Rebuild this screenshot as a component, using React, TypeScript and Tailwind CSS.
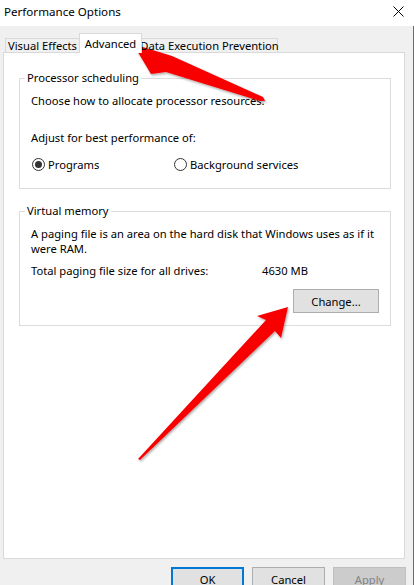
import React from "react";

// Windows 10 "Performance Options" dialog, Advanced tab, with two red callout arrows

function Radio({ checked, label }: { checked?: boolean; label: string }) {
  return (
    <label className="flex items-center gap-[3px]">
      <span className="w-[13px] h-[13px] rounded-full border border-[#333333] bg-white flex items-center justify-center">
        {checked && <span className="w-[7px] h-[7px] rounded-full bg-[#333333]" />}
      </span>
      <span>{label}</span>
    </label>
  );
}

function GroupBox({ title, className, children }: { title: string; className?: string; children: React.ReactNode }) {
  return (
    <fieldset className={`w-[372px] border border-[#dcdcdc] ${className ?? ""}`}>
      <legend className="ml-[5px] px-[2px] leading-[16px]">{title}</legend>
      {children}
    </fieldset>
  );
}

function DialogButton({
  children,
  primary,
  disabled,
}: {
  children: React.ReactNode;
  primary?: boolean;
  disabled?: boolean;
}) {
  if (disabled) {
    return (
      <div className="w-[73px] h-[24px] flex items-center justify-center bg-[#cccccc] border border-[#bfbfbf] text-[#838383]">
        {children}
      </div>
    );
  }
  return (
    <div
      className={`w-[73px] h-[24px] flex items-center justify-center bg-[#e1e1e1] ${
        primary ? "border-2 border-[#0078d7]" : "border border-[#adadad]"
      }`}
    >
      {children}
    </div>
  );
}

function Arrows() {
  return (
    <svg className="absolute inset-0 pointer-events-none" width="414" height="585" viewBox="0 0 414 585">
      <defs>
        <filter id="shadow" x="-10%" y="-10%" width="130%" height="130%">
          <feDropShadow dx="1" dy="1.5" stdDeviation="1" floodColor="#000" floodOpacity="0.35" />
        </filter>
      </defs>
      <g filter="url(#shadow)" fill="#f80000">
        <polygon points="133,44 172,56 263,97 265,101 260,101 166,72 151,74" />
        <polygon points="288,307 281,338 275,331 140,460 138,459 266,320 257,316" />
      </g>
    </svg>
  );
}

export default function App(): React.JSX.Element {
  return (
    <div className="relative w-[414px] h-[585px] overflow-hidden bg-[#f0f0f0] text-black text-[11.2px] leading-[15px] font-['Segoe_UI','Noto_Sans',sans-serif]">
      {/* Title bar */}
      <div className="h-[26px] bg-white flex items-center justify-between pl-[4px] pr-[10px]">
        <span className="text-[11.6px] -mt-[3px]">Performance Options</span>
        <svg width="11" height="11" viewBox="0 0 11 11" className="-mt-[4px]">
          <path d="M0.5 0.5 L10.5 10.5 M10.5 0.5 L0.5 10.5" stroke="#000" strokeWidth="1" />
        </svg>
      </div>

      {/* Body */}
      <div className="h-[559px] border-r border-[#6e6e6e] pl-[3px] pt-[7px]">
        {/* Tabs */}
        <div className="relative z-10 flex items-end h-[20px] -mb-px pl-[2px] whitespace-nowrap">
          <div className="w-[75px] h-[14px] mb-px flex items-center justify-center border border-b-0 border-[#d9d9d9]">
            Visual Effects
          </div>
          <div className="relative z-10 -ml-px w-[63px] h-[20px] flex items-center justify-center bg-white border border-b-0 border-[#d9d9d9]">
            Advanced
          </div>
          <div className="-ml-px w-[137px] h-[14px] mb-px flex items-center justify-center border border-b-0 border-[#d9d9d9]">
            Data Execution Prevention
          </div>
        </div>

        {/* Tab panel */}
        <div className="w-[402px] h-[507px] bg-white border border-[#d9d9d9] pl-[15px] pt-[17px]">
          <GroupBox title="Processor scheduling">
            <div className="pl-[11px] pt-[7px] pb-[16px]">
              <p>Choose how to allocate processor resources.</p>
              <p className="mt-[22px]">Adjust for best performance of:</p>
              <div className="mt-[12px] h-[15px] flex items-center pl-[1px]">
                <div className="w-[142px]">
                  <Radio checked label="Programs" />
                </div>
                <Radio label="Background services" />
              </div>
            </div>
          </GroupBox>

          <GroupBox title="Virtual memory" className="mt-[14px]">
            <div className="pl-[11px] pr-[11px] pt-[7px] pb-[12px]">
              <p>
                <span className="block whitespace-nowrap">
                  A paging file is an area on the hard disk that Windows uses as if it
                </span>
                <span className="block">were RAM.</span>
              </p>
              <div className="mt-[7px] flex">
                <span className="w-[231px]">Total paging file size for all drives:</span>
                <span>4630 MB</span>
              </div>
              <div className="mt-[11px] flex justify-end">
                <div className="w-[86px] h-[24px] flex items-center justify-center bg-[#e1e1e1] border border-[#adadad]">
                  Change...
                </div>
              </div>
            </div>
          </GroupBox>
        </div>

        {/* Dialog buttons */}
        <div className="mt-[8px] flex gap-[8px] pl-[168px]">
          <DialogButton primary>OK</DialogButton>
          <DialogButton>Cancel</DialogButton>
          <DialogButton disabled>Apply</DialogButton>
        </div>
      </div>

      <Arrows />
    </div>
  );
}
